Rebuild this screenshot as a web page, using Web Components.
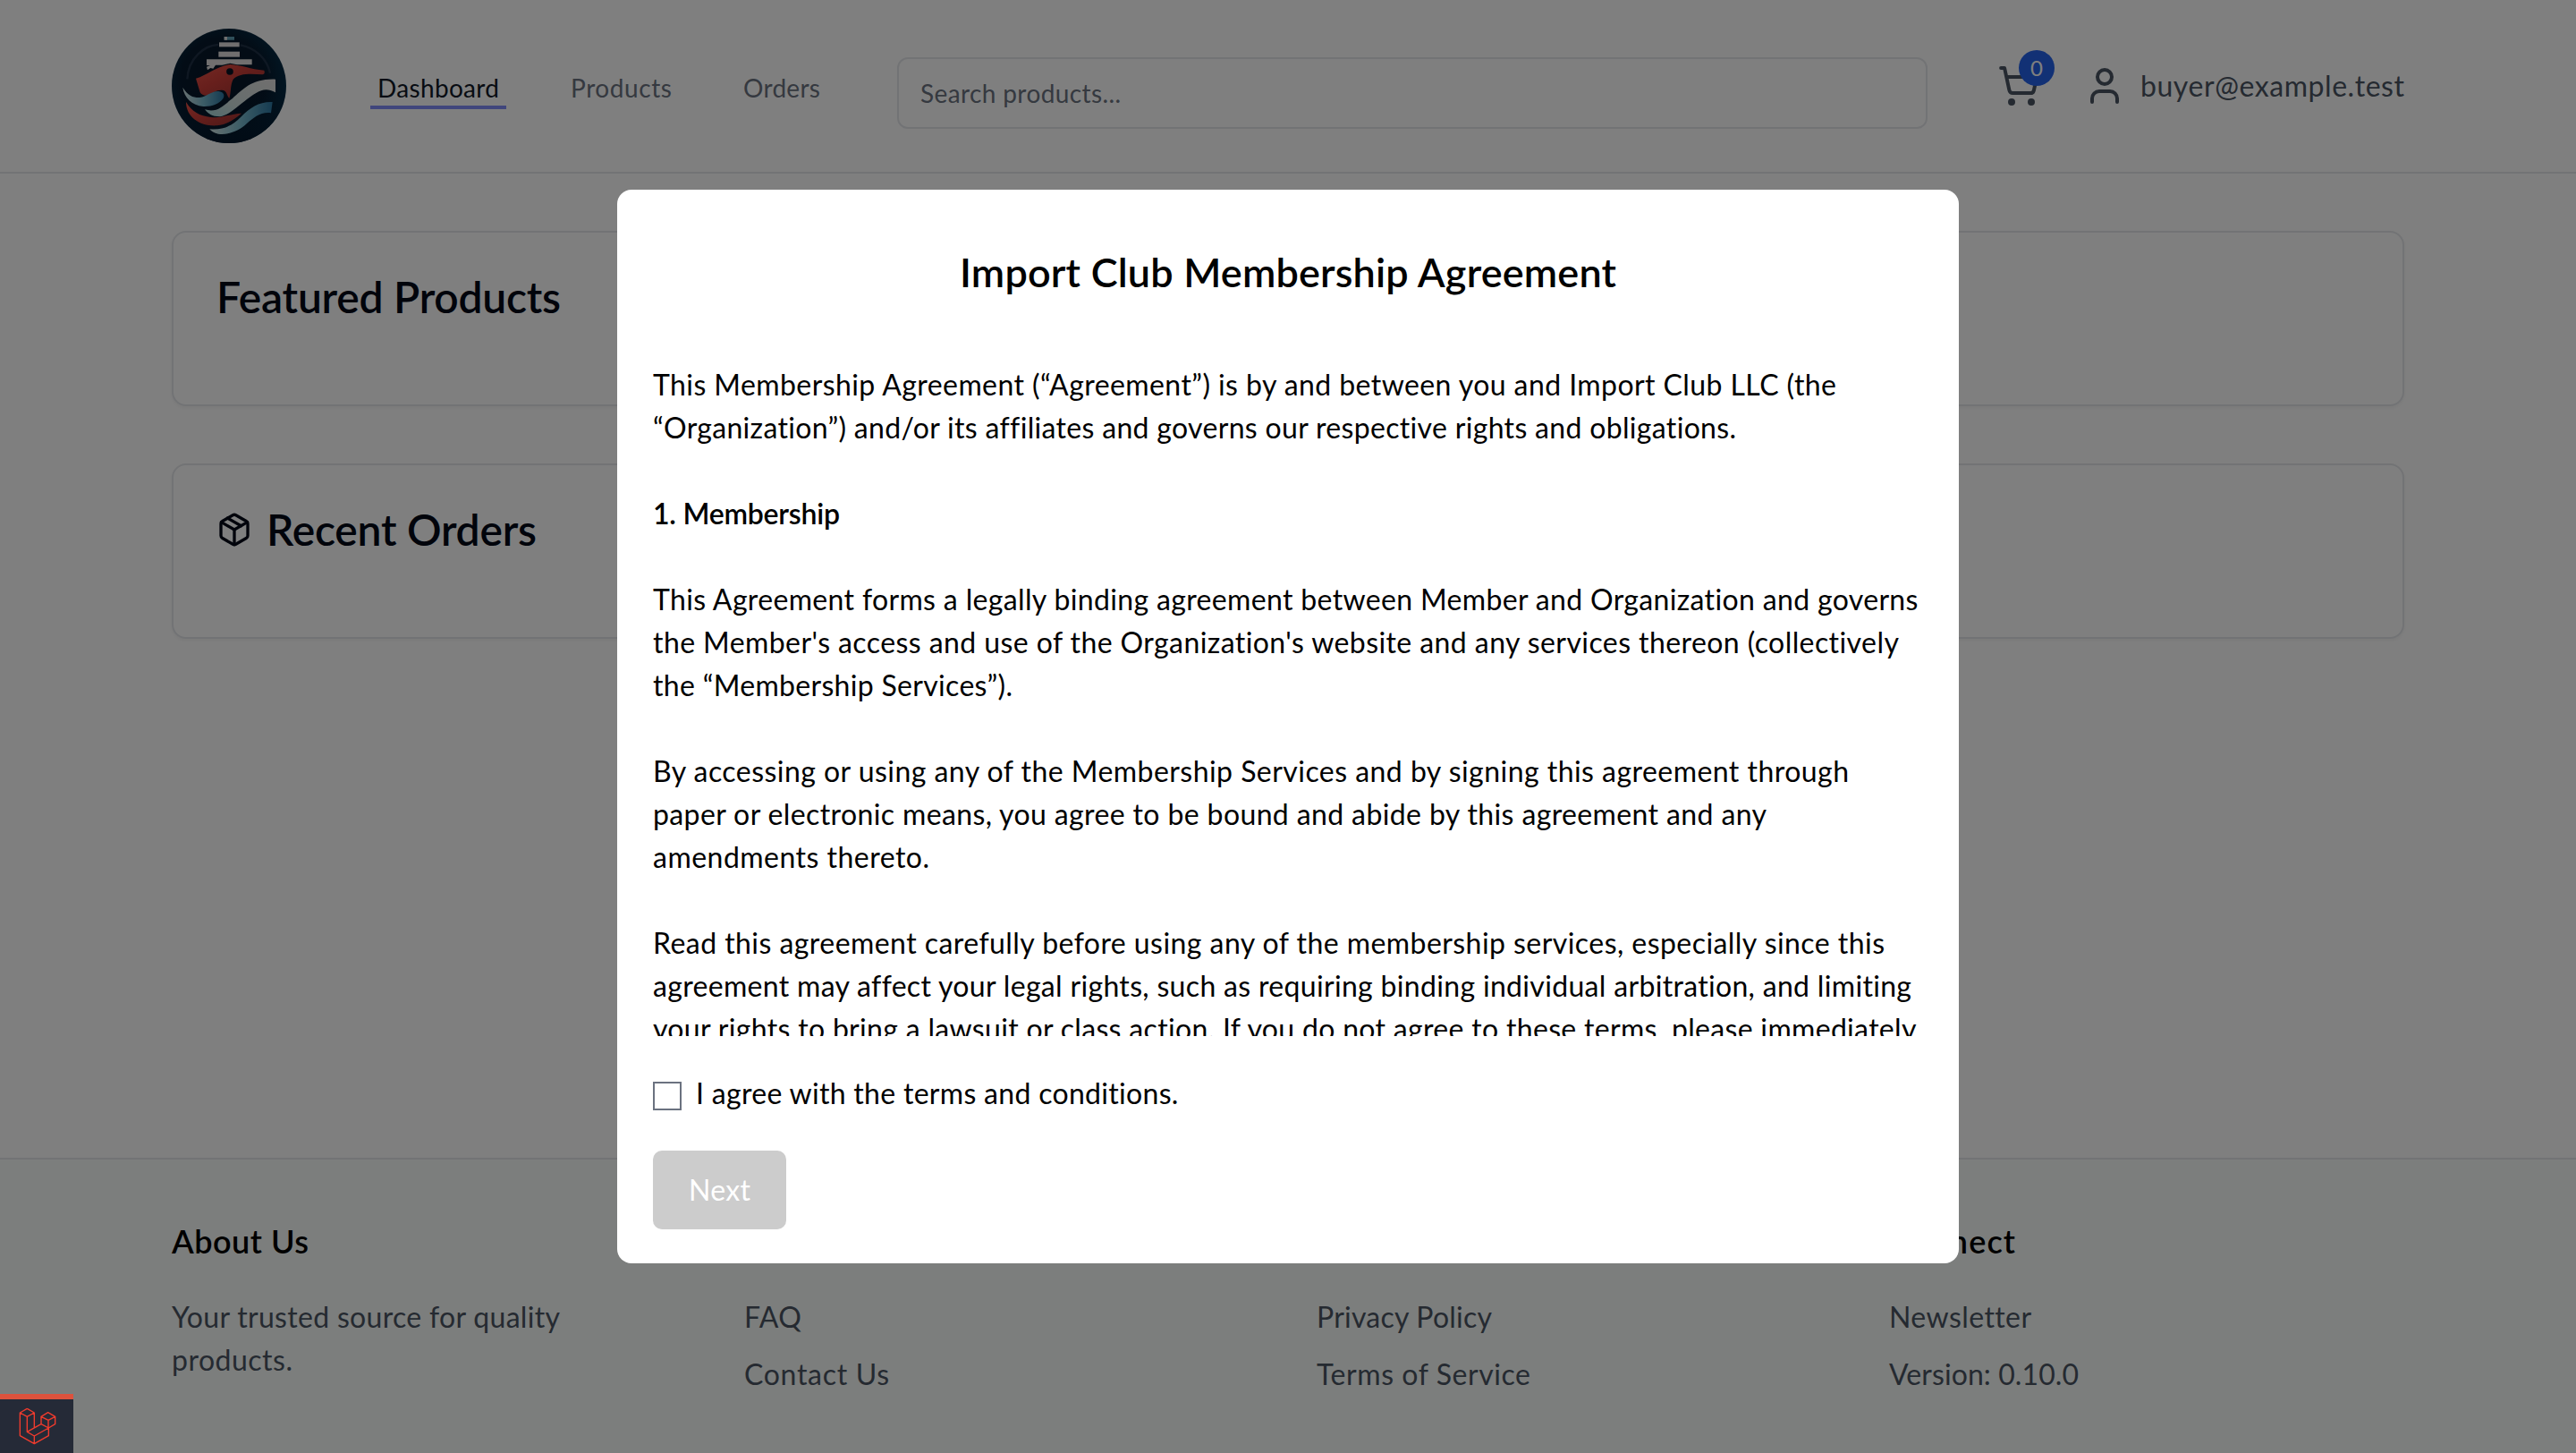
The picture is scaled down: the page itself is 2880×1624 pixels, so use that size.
<!DOCTYPE html>
<html lang="en">
<head>
<meta charset="utf-8">
<title>Import Club</title>
<style>
html,body{margin:0;padding:0;background:#fff;overflow:hidden}
body{font:32px/48px Lato,"Open Sans",sans-serif;color:#000}
</style>
</head>
<body>
<club-app></club-app>
<script>
class Base extends HTMLElement{
  constructor(){super();this.attachShadow({mode:'open'}).innerHTML=this.constructor.html;}
}
const def=(name,html)=>customElements.define(name,class extends Base{static get html(){return html}});

/* One line of text, tracked so that it fills the width in its "w" attribute. */
customElements.define('fit-line',class extends Base{
  static get html(){return `<style>:host{display:block;white-space:nowrap;flex:none}span{display:inline-block}</style><span><slot></slot></span>`}
  connectedCallback(){requestAnimationFrame(()=>this.fit());this.fit();}
  fit(){
    const w=+this.getAttribute('w'),s=this.shadowRoot.querySelector('span'),n=this.textContent.length;
    this.style.width=w+'px';
    s.style.letterSpacing='0px';
    const m=s.getBoundingClientRect().width;
    if(m>0&&n>1)s.style.letterSpacing=((w-m)/(n-1)).toFixed(4)+'px';
  }
});

def('club-logo',`<style>:host{display:block;width:128px;height:128px;border-radius:50%;overflow:hidden;flex:none}svg{display:block}</style>
<svg width="128" height="128" viewBox="66 66 384 384">
<defs>
<radialGradient id="b" cx=".45" cy=".45" r=".6"><stop offset="0" stop-color="#071526"/><stop offset=".62" stop-color="#06192c"/><stop offset="1" stop-color="#04314d"/></radialGradient>
<linearGradient id="d" x2="0" y2="1"><stop offset=".5" stop-color="#03162a" stop-opacity="0"/><stop offset="1" stop-color="#03162a"/></linearGradient>
<linearGradient id="r" x2="1" y2="1"><stop stop-color="#ec5348"/><stop offset=".4" stop-color="#cf3f39"/><stop offset="1" stop-color="#96302f"/></linearGradient>
<linearGradient id="t" x2="1"><stop stop-color="#cfe2e2"/><stop offset=".5" stop-color="#78b9cd"/><stop offset="1" stop-color="#2b76a2"/></linearGradient>
<linearGradient id="w" x2="1" y1="1" y2="0"><stop stop-color="#a3d6d9"/><stop offset=".35" stop-color="#ccdcdb"/><stop offset="1" stop-color="#e2dfde"/></linearGradient>
</defs>
<rect x="66" y="66" width="384" height="384" fill="url(#b)"/><rect x="66" y="66" width="384" height="384" fill="url(#d)"/>
<path d="M118 235C122 165 175 122 222 120M296 121C345 130 385 165 396 215" fill="none" stroke="#24364c" stroke-width="7" opacity=".8"/>
<g fill="#e2dfde"><rect x="225" y="112" width="68" height="15"/><rect x="223" y="143" width="71" height="18"/><path d="M183 169H335V187H285L262 182L235 188H213L205 200L196 198L186 205L183 194L195 189H183Z"/></g>
<path d="M242 93h34v11h-34z" fill="#5e9fb4"/><path d="M242 93h10v11h-10z" fill="#e2dfde"/>
<path d="M147 233C185 222 220 190 262 186C300 188 330 202 376 206C379 214 377 219 370 220C330 218 292 215 272 236C262 255 266 276 259 300C250 290 252 277 239 273C218 269 205 282 190 289C178 292 167 290 161 280Z" fill="url(#r)"/>
<circle cx="261" cy="210" r="11.500" fill="#061322"/>
<path d="M103 263C120 292 140 298 160 297C185 293 200 274 224 276C240 278 245 290 238 301C225 319 200 328 172 327C133 323 108 298 103 263Z" fill="url(#t)"/>
<path d="M177 337C220 350 240 322 270 300C305 270 335 233 414 236V280C375 257 350 280 318 303C283 330 257 356 228 361C200 361 188 351 177 337Z" fill="url(#w)"/>
<path d="M114 312C133 345 160 359 197 363C235 367 265 351 300 350C275 370 255 387 218 391C165 395 114 365 114 312Z" fill="url(#r)"/>
<path d="M193 403C240 407 268 391 298 362C330 330 360 310 404 312L399 349C365 344 340 365 318 384C290 410 255 423 222 419C208 416 199 410 193 403Z" fill="url(#t)"/>
</svg>`);

def('nav-link',`<style>:host{display:block;padding:0 8px 0;line-height:40px;border-bottom:4px solid transparent;color:#6b7280}
:host([active]){color:#111827;border-color:#818cf8}</style><slot></slot>`);

def('cart-button',`<style>:host{display:block;position:relative;width:48px;height:48px;flex:none}svg{display:block}
b{position:absolute;left:24px;top:-16px;width:40px;height:40px;border-radius:50%;background:#2563eb;color:#fff;font:24px/39px Lato,sans-serif;text-align:center}</style>
<svg width="48" height="48" viewBox="0 0 24 24" fill="none" stroke="#4b5563" stroke-width="2" stroke-linecap="round" stroke-linejoin="round"><circle cx="8" cy="21" r="1"/><circle cx="19" cy="21" r="1"/><path d="M2.050 2.050h2l2.660 12.420a2 2 0 0 0 2 1.580h9.780a2 2 0 0 0 1.950-1.570l1.650-7.430H5.120"/></svg><b>0</b>`);

def('user-icon',`<style>:host{display:block;width:48px;height:48px;flex:none}svg{display:block}</style>
<svg width="48" height="48" viewBox="0 0 24 24" fill="none" stroke="#4b5563" stroke-width="2" stroke-linecap="round" stroke-linejoin="round"><path d="M19 21v-2a4 4 0 0 0-4-4H9a4 4 0 0 0-4 4v2"/><circle cx="12" cy="7" r="4"/></svg>`);

def('package-icon',`<style>:host{display:block;width:40px;height:40px;flex:none}svg{display:block}</style>
<svg width="40" height="40" viewBox="0 0 24 24" fill="none" stroke="#020817" stroke-width="2" stroke-linecap="round" stroke-linejoin="round"><path d="m7.500 4.270 9 5.150"/><path d="M21 8a2 2 0 0 0-1-1.730l-7-4a2 2 0 0 0-2 0l-7 4A2 2 0 0 0 3 8v8a2 2 0 0 0 1 1.730l7 4a2 2 0 0 0 2 0l7-4A2 2 0 0 0 21 16Z"/><path d="m3.300 7 8.700 5 8.700-5"/><path d="M12 22V12"/></svg>`);

def('site-header',`<style>:host{display:block;height:192px;border-bottom:2px solid #e5e7eb}
.in{width:2496px;margin:0 auto;display:flex;align-items:flex-start}
club-logo{margin-top:32px}nav{display:flex;gap:64px;margin:78px 0 0 94px;font-size:28px}
.search{box-sizing:border-box;width:1152px;height:80px;margin:64px 0 0 78px;border:2px solid #e5e7eb;border-radius:12px;padding-left:24px;font-size:28px;line-height:77px;color:#6b7280}
cart-button{margin:72px 0 0 78px}user-icon{margin:72px 0 0 48px}.mail{margin:72px 0 0 16px;color:#4b5563}</style>
<div class="in"><club-logo></club-logo>
<nav><nav-link active><fit-line w="136">Dashboard</fit-line></nav-link><nav-link><fit-line w="113">Products</fit-line></nav-link><nav-link><fit-line w="86">Orders</fit-line></nav-link></nav>
<div class="search"><fit-line w="224">Search products...</fit-line></div>
<cart-button></cart-button><user-icon></user-icon><fit-line class="mail" w="295">buyer@example.test</fit-line></div>`);

def('panel-card',`<style>:host{display:flex;box-sizing:border-box;height:196px;border:2px solid #e5e7eb;border-radius:16px;padding:48px 48px 46px;gap:16px;align-items:flex-start;background:#fff;box-shadow:0 2px 4px rgba(0,0,0,.05);font-size:48px;line-height:48px;font-weight:600;color:#020817}
::slotted(package-icon){margin-top:4px}</style><slot></slot>`);

def('footer-column',`<style>:host{display:block;width:576px;color:#4b5563}
h3{margin:0 0 34px;height:54px;font-size:36px;line-height:54px;font-weight:600;color:#000}
.b{display:flex;flex-direction:column;gap:var(--gap,16px)}</style><h3><slot name="title"></slot></h3><div class="b"><slot></slot></div>`);

def('site-footer',`<style>:host{display:block;box-sizing:border-box;height:330px;border-top:2px solid #e5e7eb;background:#f9fcfa}
.in{width:2496px;margin:0 auto;padding-top:64px;display:flex;gap:64px}</style>
<div class="in">
<footer-column style="--gap:0px"><fit-line slot="title" w="153">About Us</fit-line><fit-line w="434">Your trusted source for quality</fit-line><fit-line w="135">products.</fit-line></footer-column>
<footer-column><fit-line w="64">FAQ</fit-line><fit-line w="162">Contact Us</fit-line></footer-column>
<footer-column><fit-line w="196">Privacy Policy</fit-line><fit-line w="239">Terms of Service</fit-line></footer-column>
<footer-column><fit-line slot="title" w="141">Connect</fit-line><fit-line w="158">Newsletter</fit-line><fit-line w="212">Version: 0.10.0</fit-line></footer-column>
</div>`);

def('agreement-modal',`<style>:host{position:fixed;inset:0;background:rgba(0,0,0,.5);display:flex;align-items:center;justify-content:center}
.box{box-sizing:border-box;width:1500px;height:1200px;padding:60px 40px 0;background:#fff;border-radius:16px}
h2{margin:0;display:flex;justify-content:center;font-size:45px;line-height:64px;font-weight:600}
.scroll{margin-top:70px;height:752px;overflow:hidden}p{margin:0 0 48px}
.agree{display:flex;gap:16px;margin-top:40px}.agree i{box-sizing:border-box;width:32px;height:32px;margin-top:11px;border:2px solid #6b7280}
.btn{width:149px;height:88px;margin-top:40px;border-radius:10px;background:#ccc;color:#fff;line-height:87px;display:flex;justify-content:center}</style>
<div class="box"><h2><fit-line w="734">Import Club Membership Agreement</fit-line></h2>
<div class="scroll">
<p><fit-line w="1323">This Membership Agreement (“Agreement”) is by and between you and Import Club LLC (the</fit-line><fit-line w="1211">“Organization”) and/or its affiliates and governs our respective rights and obligations.</fit-line></p>
<p style="font-weight:600"><fit-line w="209">1. Membership</fit-line></p>
<p><fit-line w="1415">This Agreement forms a legally binding agreement between Member and Organization and governs</fit-line><fit-line w="1394">the Member's access and use of the Organization's website and any services thereon (collectively</fit-line><fit-line w="402">the “Membership Services”).</fit-line></p>
<p><fit-line w="1337">By accessing or using any of the Membership Services and by signing this agreement through</fit-line><fit-line w="1245">paper or electronic means, you agree to be bound and abide by this agreement and any</fit-line><fit-line w="309">amendments thereto.</fit-line></p>
<p><fit-line w="1377">Read this agreement carefully before using any of the membership services, especially since this</fit-line><fit-line w="1407">agreement may affect your legal rights, such as requiring binding individual arbitration, and limiting</fit-line><fit-line w="1413">your rights to bring a lawsuit or class action. If you do not agree to these terms, please immediately</fit-line></p>
</div>
<div class="agree"><i></i><fit-line w="540">I agree with the terms and conditions.</fit-line></div>
<div class="btn"><fit-line w="69">Next</fit-line></div></div>`);

def('debug-badge',`<style>:host{position:fixed;left:0;bottom:0;width:82px;height:60px;border-top:6px solid #dd523d;background:#252a37}svg{display:block;margin:8px 0 0 20px}</style>
<svg width="44" height="44" viewBox="60 96 132 132" fill="none" stroke="#ef3b2d" stroke-width="4.200" stroke-linejoin="round"><path d="M91 103L67 117V194L115 221L163 194V168L185 155V130L161 116L138 130V155L91 181V130L67 117M91 103L115 117V167M115 117L91 130M91 181L115 195V221M115 195L163 168L138 155M138 130L162 142L185 130M162 142V168"/></svg>`);

def('club-app',`<style>:host{display:flex;flex-direction:column;height:1624px;background:#fff}
main{flex:1;width:2496px;margin:0 auto;padding-top:64px;display:flex;flex-direction:column;gap:64px}</style>
<site-header></site-header>
<main><panel-card><fit-line w="385">Featured Products</fit-line></panel-card>
<panel-card><package-icon></package-icon><fit-line w="302">Recent Orders</fit-line></panel-card></main>
<site-footer></site-footer><agreement-modal></agreement-modal><debug-badge></debug-badge>`);
</script>
</body>
</html>
